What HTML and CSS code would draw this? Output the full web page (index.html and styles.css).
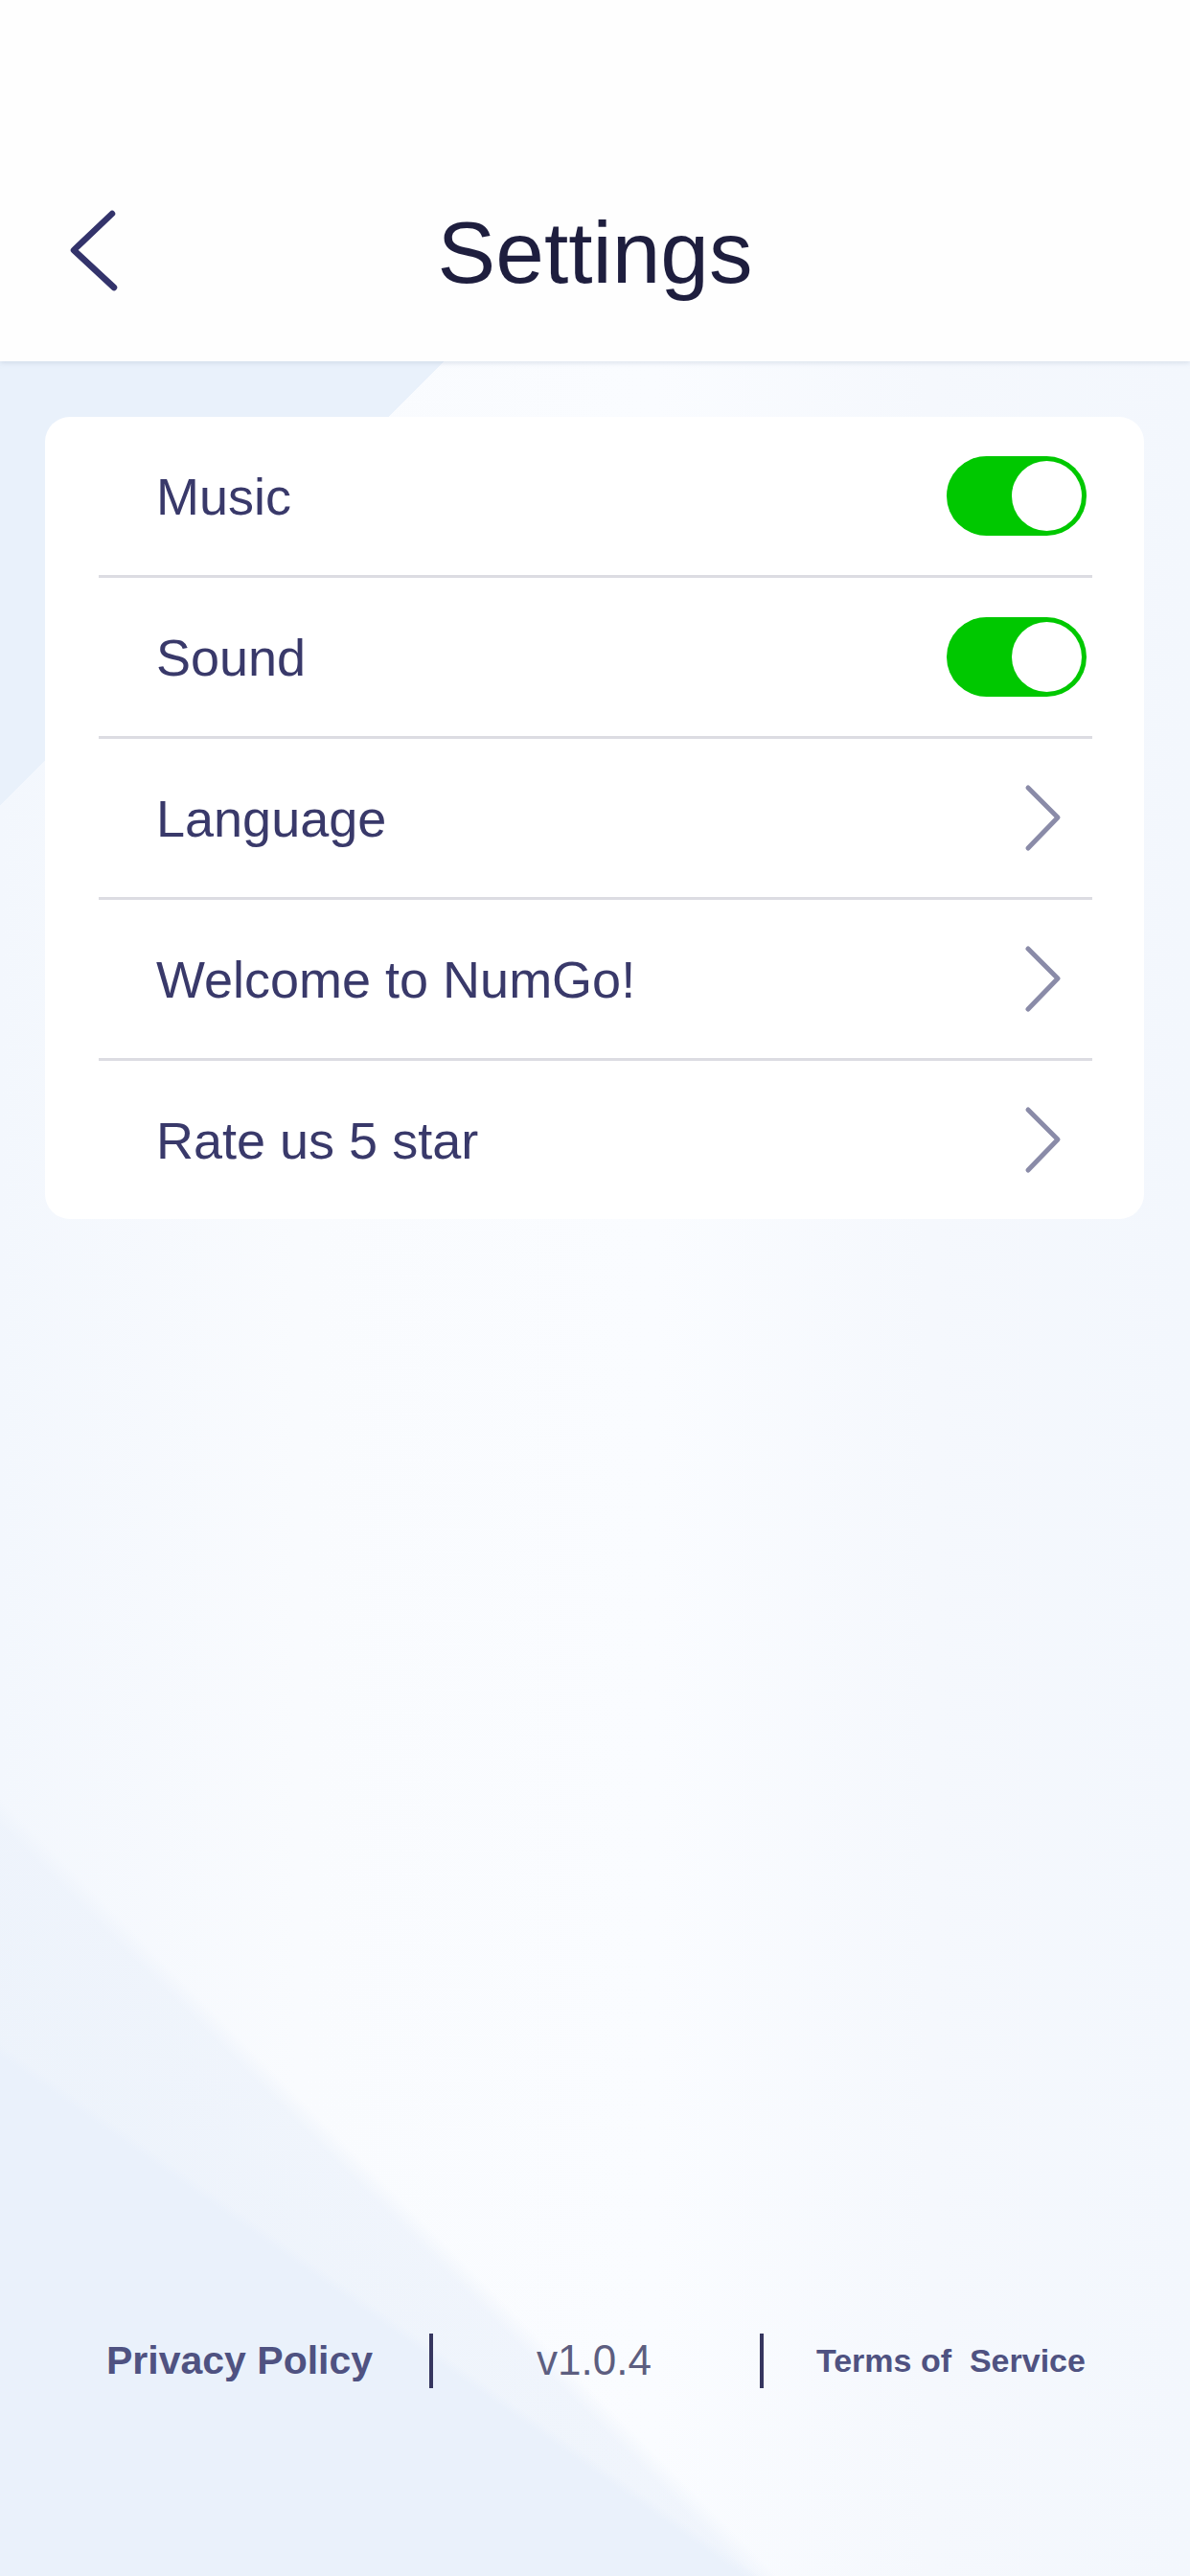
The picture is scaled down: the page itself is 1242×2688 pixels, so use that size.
FILE: index.html
```html
<!DOCTYPE html>
<html lang="en">
<head>
    <meta charset="UTF-8">
    <meta name="viewport" content="width=device-width, initial-scale=1.0">
    <title>Settings</title>
    <link rel="stylesheet" href="styles.css">
</head>
<body>
    <header class="top-bar">
        <div class="top-row">
            <button class="back-btn" aria-label="Back">
                <svg width="56" height="90" viewBox="0 0 56 90">
                    <path d="M47 6 L7 44 L49 83" fill="none" stroke="#33336b" stroke-width="6.5" stroke-linecap="round" stroke-linejoin="round"/>
                </svg>
            </button>
            <h1 class="title">Settings</h1>
            <div></div>
        </div>
    </header>

    <div class="card">
        <div class="row">
            <span class="label">Music</span>
            <div class="toggle on"><div class="knob"></div></div>
        </div>
        <div class="row">
            <span class="label">Sound</span>
            <div class="toggle on"><div class="knob"></div></div>
        </div>
        <div class="row">
            <span class="label">Language</span>
            <svg class="chevron" width="40" height="71" viewBox="0 0 40 71">
                <path d="M4 4 L35 35 L4 67" fill="none" stroke="#8a8ba8" stroke-width="5" stroke-linecap="round" stroke-linejoin="round"/>
            </svg>
        </div>
        <div class="row">
            <span class="label">Welcome to NumGo!</span>
            <svg class="chevron" width="40" height="71" viewBox="0 0 40 71">
                <path d="M4 4 L35 35 L4 67" fill="none" stroke="#8a8ba8" stroke-width="5" stroke-linecap="round" stroke-linejoin="round"/>
            </svg>
        </div>
        <div class="row">
            <span class="label">Rate us 5 star</span>
            <svg class="chevron" width="40" height="71" viewBox="0 0 40 71">
                <path d="M4 4 L35 35 L4 67" fill="none" stroke="#8a8ba8" stroke-width="5" stroke-linecap="round" stroke-linejoin="round"/>
            </svg>
        </div>
    </div>

    <footer class="footer">
        <a class="link privacy">Privacy Policy</a>
        <span class="divider d1"></span>
        <span class="version">v1.0.4</span>
        <span class="divider d2"></span>
        <a class="link terms">Terms of&nbsp; Service</a>
    </footer>
</body>
</html>
```

FILE: styles.css
```css
html, body { margin: 0; padding: 0; }
body {
    font-family: "Liberation Sans", Arial, sans-serif;
    width: 1242px;
    height: 2688px;
    overflow: hidden;
    display: flex;
    flex-direction: column;
    background-color: #f5f8fd;
    background-image:
        linear-gradient(135deg, #e9f1fb 594px, transparent 594px),
        linear-gradient(215deg, transparent 2459px, #eaf1fb 2470px),
        linear-gradient(225deg, transparent 2205px, rgba(236, 242, 251, 0.7) 2225px, #edf3fb 2450px),
        linear-gradient(90deg, #f3f7fd 0%, #f9fbfe 25%, #fafcff 55%, #f5f8fd 78%, #f3f7fd 100%);
}

/* header */
.top-bar {
    height: 377px;
    background: #fefefe;
    box-shadow: 0 2px 5px rgba(170, 182, 205, 0.35);
    position: relative;
    z-index: 1;
    box-sizing: border-box;
    padding-top: 202px;
}
.top-row {
    height: 120px;
    display: grid;
    grid-template-columns: 1fr auto 1fr;
    align-items: center;
}
.back-btn {
    background: none;
    border: none;
    padding: 0;
    margin-left: 70px;
    width: 56px;
    height: 90px;
    cursor: pointer;
}
.back-btn svg { display: block; }
.title {
    margin: 0;
    font-size: 91px;
    line-height: 1;
    font-weight: normal;
    color: #1e1e3e;
    margin-top: 3px;
}

/* card */
.card {
    margin: 58px 48px 0 47px;
    background: #ffffff;
    border-radius: 26px;
    padding: 0 54px 0 56px;
}
.row {
    height: 165px;
    display: flex;
    align-items: center;
    justify-content: space-between;
    padding: 0 6px 0 60px;
    border-bottom: 3px solid #dcdce2;
}
.row:last-child { border-bottom: none; }
.label {
    font-size: 54px;
    color: #39396a;
}
.chevron { margin-right: 25px; display: block; }

.toggle {
    width: 146px;
    height: 83px;
    border-radius: 42px;
    background: #00c800;
    box-sizing: border-box;
    padding: 5px 5px;
    display: flex;
    justify-content: flex-end;
}
.knob {
    width: 73px;
    height: 73px;
    border-radius: 50%;
    background: #ffffff;
}

/* footer */
.footer {
    margin-top: auto;
    margin-bottom: 195px;
    height: 60px;
    display: flex;
    align-items: center;
    padding-left: 111px;
}
.link {
    font-weight: bold;
    color: #4f5281;
}
.privacy { font-size: 41px; }
.terms { font-size: 34px; margin-left: 55px; }
.version {
    font-size: 44px;
    color: #5d5e80;
    margin-left: 108px;
}
.divider {
    width: 4px;
    height: 57px;
    background: #36365f;
}
.d1 { margin-left: 59px; }
.d2 { margin-left: 113px; }
```
